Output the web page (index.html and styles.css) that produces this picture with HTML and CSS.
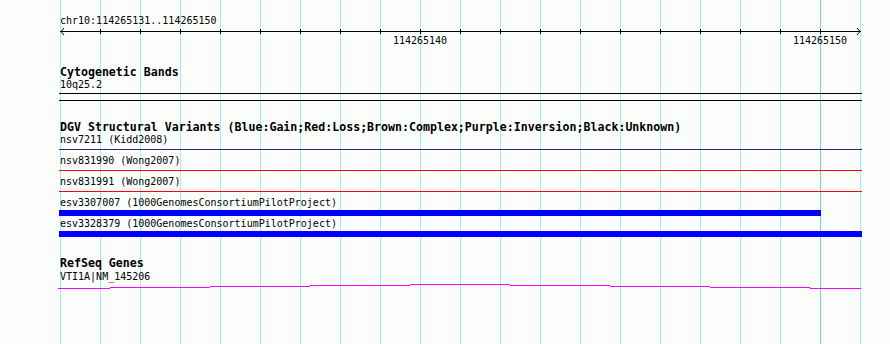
FILE: index.html
```html
<!DOCTYPE html>
<html lang="en">
<head>
    <meta charset="UTF-8">
    <title>Detail view</title>
    <link rel="stylesheet" href="styles.css">
</head>
<body>
    <div class="panel">
        <div class="ruler-label">chr10:114265131..114265150</div>
        <svg class="ruler" width="890" height="8" viewBox="0 0 890 8" shape-rendering="crispEdges">
            <rect x="60" y="4" width="801" height="1" fill="#000"/>
            <g fill="#000">
                <rect x="100" y="2" width="1" height="5"/><rect x="140" y="2" width="1" height="5"/>
                <rect x="180" y="2" width="1" height="5"/><rect x="220" y="2" width="1" height="5"/>
                <rect x="260" y="2" width="1" height="5"/><rect x="300" y="2" width="1" height="5"/>
                <rect x="340" y="2" width="1" height="5"/><rect x="380" y="2" width="1" height="5"/>
                <rect x="420" y="2" width="1" height="5"/><rect x="460" y="2" width="1" height="5"/>
                <rect x="500" y="2" width="1" height="5"/><rect x="540" y="2" width="1" height="5"/>
                <rect x="580" y="2" width="1" height="5"/><rect x="620" y="2" width="1" height="5"/>
                <rect x="660" y="2" width="1" height="5"/><rect x="700" y="2" width="1" height="5"/>
                <rect x="740" y="2" width="1" height="5"/><rect x="780" y="2" width="1" height="5"/>
                <rect x="820" y="2" width="1" height="5"/>
            </g>
            <polyline points="64,1 61,4.5 64,8" fill="none" stroke="#000" stroke-width="1" shape-rendering="auto"/>
            <polyline points="857,1 860,4.5 857,8" fill="none" stroke="#000" stroke-width="1" shape-rendering="auto"/>
        </svg>
        <div class="ticks">
            <span class="tick-label col-10">114265140</span>
            <span class="tick-label col-20">114265150</span>
        </div>

        <div class="track-title first">Cytogenetic Bands</div>
        <div class="feature-label">10q25.2</div>
        <div class="band"></div>
        <div class="band gap"></div>

        <div class="track-title">DGV Structural Variants (Blue:Gain;Red:Loss;Brown:Complex;Purple:Inversion;Black:Unknown)</div>
        <div class="feature-label">nsv7211 (Kidd2008)</div>
        <div class="variant purple"></div>
        <div class="feature-label spaced">nsv831990 (Wong2007)</div>
        <div class="variant red"></div>
        <div class="feature-label spaced">nsv831991 (Wong2007)</div>
        <div class="variant red"></div>
        <div class="feature-label spaced">esv3307007 (1000GenomesConsortiumPilotProject)</div>
        <div class="gain short"></div>
        <div class="feature-label after-bar">esv3328379 (1000GenomesConsortiumPilotProject)</div>
        <div class="gain"></div>

        <div class="track-title">RefSeq Genes</div>
        <div class="feature-label close">VTI1A|NM_145206</div>
        <svg class="gene" width="804" height="5" viewBox="0 0 804 5" shape-rendering="crispEdges">
            <g fill="#ff00ff">
                <rect x="0" y="4" width="52" height="1"/>
                <rect x="52" y="3" width="100" height="1"/>
                <rect x="152" y="2" width="100" height="1"/>
                <rect x="252" y="1" width="100" height="1"/>
                <rect x="352" y="0" width="100" height="1"/>
                <rect x="452" y="1" width="100" height="1"/>
                <rect x="552" y="2" width="100" height="1"/>
                <rect x="652" y="3" width="100" height="1"/>
                <rect x="752" y="4" width="51" height="1"/>
            </g>
        </svg>
    </div>
</body>
</html>
```

FILE: styles.css
```css
*
{
    margin: 0;
    padding: 0;
    box-sizing: border-box;
}
body
{
    background-color: #fafdfa;
    font-family: "DejaVu Sans Mono", monospace;
    color: #000;
}
.panel
{
    width: 890px;
    height: 344px;
    overflow: hidden;
    background-image:
        linear-gradient(#7ccfec, #7ccfec),
        repeating-linear-gradient(to right, #a6eaf2 0 1px, transparent 1px 40px);
    background-size: 1px 100%, 801px 100%;
    background-position: 820px 0, 60px 0;
    background-repeat: no-repeat;
}
.ruler-label
{
    padding-top: 15px;
    padding-left: 60px;
    font-size: 10px;
    line-height: 12px;
    height: 27px;
}
.ruler
{
    display: block;
}
.ticks
{
    display: grid;
    grid-template-columns: repeat(21, 40px);
    margin-left: 40px;
    height: 12px;
    font-size: 10px;
    line-height: 12px;
}
.tick-label
{
    justify-self: center;
    white-space: nowrap;
}
.col-10
{
    grid-column: 10;
}
.col-20
{
    grid-column: 20;
}
.track-title
{
    margin-top: 20px;
    padding-left: 60px;
    font-weight: bold;
    font-size: 11.6px;
    line-height: 13px;
    height: 13px;
    white-space: nowrap;
}
.track-title.first
{
    margin-top: 19px;
}
.feature-label
{
    padding-left: 60px;
    font-size: 10px;
    line-height: 12px;
    height: 12px;
    white-space: nowrap;
}
.feature-label.spaced
{
    margin-top: 5px;
}
.feature-label.after-bar
{
    margin-top: 2px;
}
.feature-label.close
{
    margin-top: 1px;
}
.band
{
    margin-top: 2px;
    margin-left: 59px;
    width: 803px;
    border-top: 1px solid #000;
}
.band.gap
{
    margin-top: 6px;
}
.variant
{
    margin-top: 3px;
    margin-left: 59px;
    width: 803px;
    height: 1px;
}
.purple
{
    background-color: #3d1a7c;
}
.red
{
    background-color: #ff0000;
}
.gain
{
    margin-top: 1px;
    margin-left: 59px;
    width: 803px;
    height: 6px;
    background-color: #0000ff;
}
.gain.short
{
    width: 762px;
}
.gene
{
    display: block;
    margin-top: 1px;
    margin-left: 58px;
}
```
